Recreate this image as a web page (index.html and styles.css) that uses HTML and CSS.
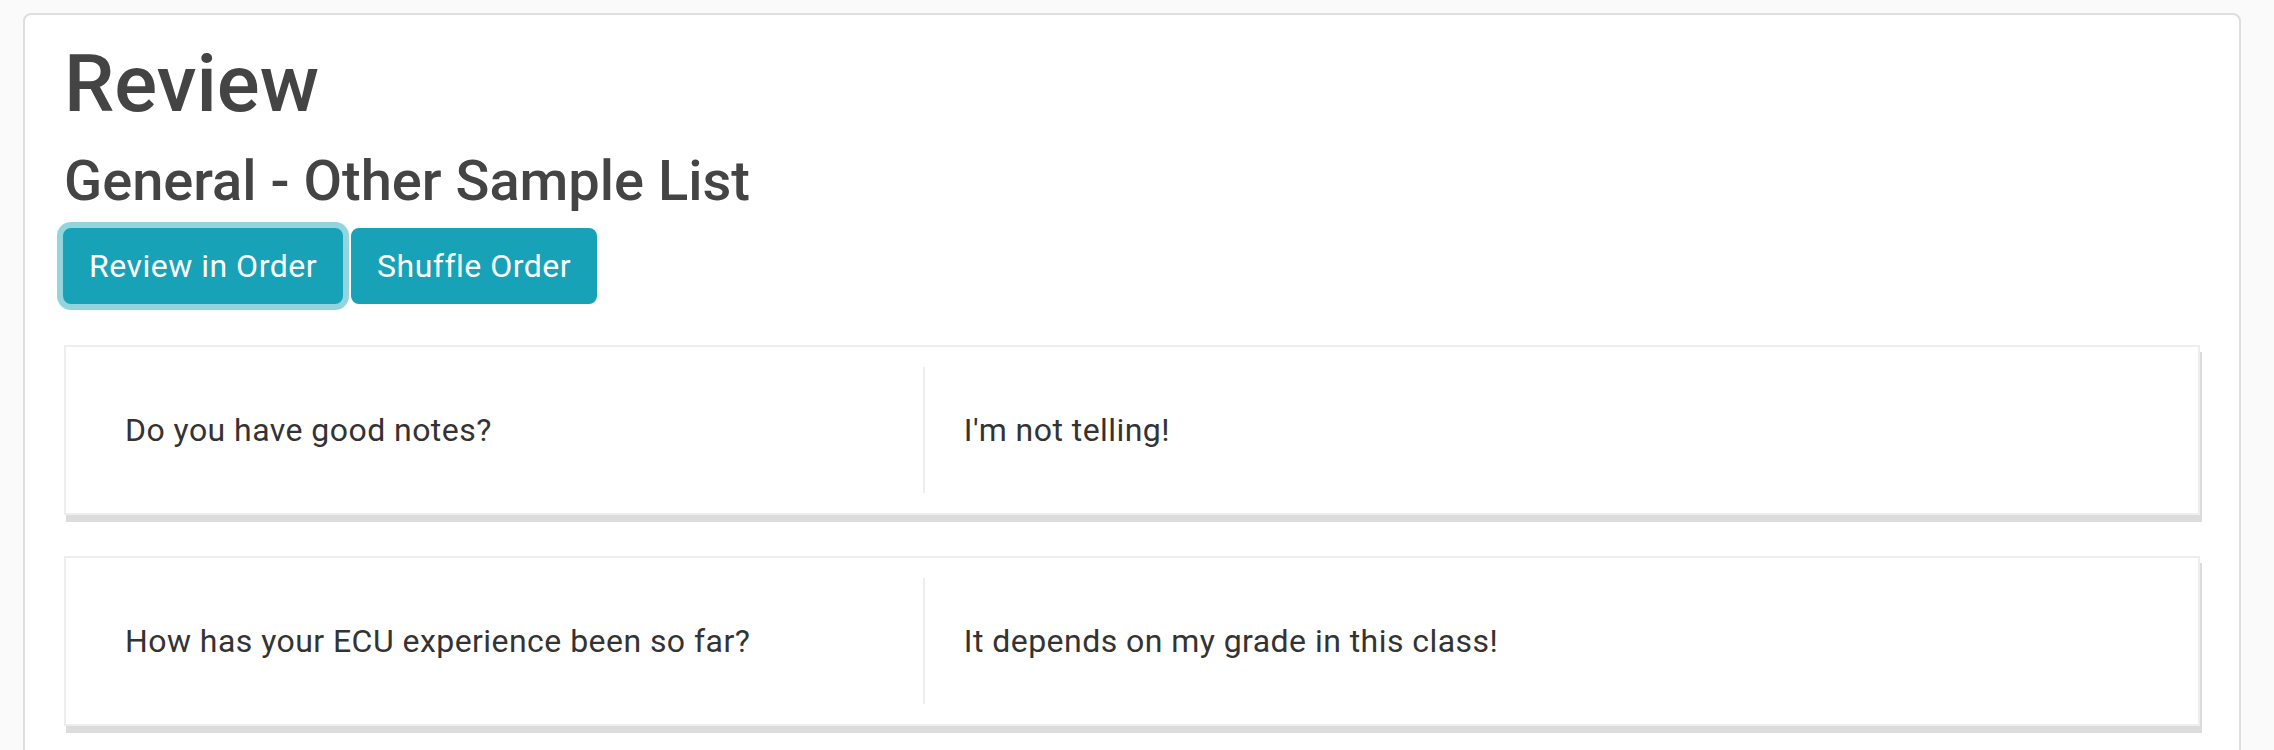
FILE: index.html
```html
<!DOCTYPE html>
<html lang="en">
<head>
<meta charset="utf-8">
<title>Review</title>
<link rel="stylesheet" href="styles.css">
</head>
<body>
  <main class="panel">
    <h1 class="title">Review</h1>
    <h3 class="subtitle">General - Other Sample List</h3>
    <div class="actions">
      <button class="btn btn-focus" type="button">Review in Order</button>
      <button class="btn" type="button">Shuffle Order</button>
    </div>
    <section class="card">
      <div class="card-row">
        <div class="col col-q">Do you have good notes?</div>
        <div class="col col-a">I'm not telling!</div>
      </div>
    </section>
    <section class="card">
      <div class="card-row">
        <div class="col col-q">How has your ECU experience been so far?</div>
        <div class="col col-a">It depends on my grade in this class!</div>
      </div>
    </section>
  </main>
</body>
</html>
```

FILE: styles.css
```css
html, body {
  margin: 0;
  padding: 0;
}

body {
  background: #fafafa;
  font-family: Roboto, "Liberation Sans", Arial, sans-serif;
  color: #333;
  overflow: hidden;
}

.panel {
  margin: 13px 33px 0 23px;
  border: 2px solid #dedede;
  border-radius: 8px;
  background: #fff;
  padding: 21px 39px 80px 39px;
  display: flex;
  flex-direction: column;
  align-items: flex-start;
}

.title {
  margin: 0 0 16px 0;
  font-size: 80px;
  line-height: 96px;
  font-weight: 500;
  color: #444;
  letter-spacing: 0;
}

.subtitle {
  margin: 0 0 13px 0;
  font-size: 56px;
  line-height: 67px;
  font-weight: 500;
  color: #444;
  letter-spacing: 0;
}

.actions {
  display: flex;
  gap: 8px;
  margin-left: -1px;
}

.btn {
  font-family: Roboto, "Liberation Sans", Arial, sans-serif;
  font-size: 32px;
  line-height: 48px;
  padding: 12px 24px;
  border: 2px solid #17a2b8;
  border-radius: 8px;
  background: #17a2b8;
  color: #fff;
  letter-spacing: 0.5px;
  cursor: pointer;
}

.btn-focus {
  box-shadow: 0 0 0 6px rgba(58, 176, 195, 0.55);
}

.card {
  align-self: stretch;
  margin-top: 41px;
  border: 2px solid #eee;
  background: #fff;
  box-shadow: 2px 7px 0 0 #dcdcdc;
  padding: 20px;
}

.card-row {
  display: grid;
  grid-template-columns: 40% 60%;
  min-height: 126px;
}

.col {
  display: flex;
  align-items: center;
  font-size: 32px;
  line-height: 48px;
  color: #333;
  letter-spacing: 0.45px;
}

.col-q {
  padding-left: 39px;
}

.col-a {
  border-left: 2px solid #eee;
  padding-left: 39px;
}
```
